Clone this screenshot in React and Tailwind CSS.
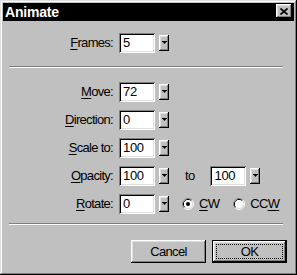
const raised =
  'shadow-[inset_-1px_-1px_#000,inset_1px_1px_#fff,inset_-2px_-2px_#808080,inset_2px_2px_#dfdfdf]';
const sunken =
  'shadow-[inset_1px_1px_#808080,inset_-1px_-1px_#fff,inset_2px_2px_#000,inset_-2px_-2px_#dfdfdf]';

function NumBox({ value, className = '' }) {
  return (
    <div className={`h-[20px] w-[36px] bg-white pl-[4px] pt-[3px] leading-[14px] tracking-[-0.3px] ${sunken} ${className}`}>
      {value}
    </div>
  );
}

function DropBtn() {
  return (
    <div className={`ml-[4px] flex h-[16px] w-[10px] items-center justify-center bg-[#c0c0c0] ${raised}`}>
      <svg width="5" height="4" viewBox="0 0 5 4">
        <path d="M0 0H5L2.5 3Z" fill="#000" />
        <rect x="0" y="0" width="5" height="1" fill="#000" />
      </svg>
    </div>
  );
}

function Label({ pre = '', ul, post }) {
  return (
    <div className="w-[110px] text-right">
      {pre}
      <span className="underline underline-offset-2">{ul}</span>
      {post}
    </div>
  );
}

function Row({ children, className = '' }) {
  return <div className={`flex h-[20px] items-center ${className}`}>{children}</div>;
}

function Radio({ checked }) {
  return (
    <svg width="12" height="12" viewBox="0 0 12 12">
      <path d="M2.11 9.89A5.5 5.5 0 0 1 9.89 2.11" stroke="#808080" fill="none" />
      <path d="M9.89 2.11A5.5 5.5 0 0 1 2.11 9.89" stroke="#fff" fill="none" />
      <path d="M2.82 9.18A4.5 4.5 0 0 1 9.18 2.82" stroke="#000" fill="none" />
      <path d="M9.18 2.82A4.5 4.5 0 0 1 2.82 9.18" stroke="#dfdfdf" fill="none" />
      <circle cx="6" cy="6" r="4" fill="#fff" />
      {checked && <circle cx="6" cy="6" r="2" fill="#000" />}
    </svg>
  );
}

function Separator({ className = '' }) {
  return <div className={`ml-[6px] h-[2px] w-[274px] border-t border-t-[#808080] border-b border-b-white ${className}`} />;
}

export default function App() {
  return (
    <div
      className={`flex h-[275px] w-[297px] flex-col bg-[#c0c0c0] p-[3px] font-['Liberation_Sans',Arial,sans-serif] text-[13px] tracking-[-0.7px] text-black shadow-[inset_-1px_-1px_#000,inset_1px_1px_#dfdfdf,inset_-2px_-2px_#808080,inset_2px_2px_#fff]`}
    >
      <div className="flex h-[18px] items-start justify-between bg-black pl-[2px] pr-[2px]">
        <span className="text-[14px] font-bold leading-[18px] tracking-[-0.2px] text-white">Animate</span>
        <div className={`mt-[1px] flex h-[14px] w-[16px] items-center justify-center bg-[#c0c0c0] ${raised}`}>
          <svg width="8" height="7" viewBox="0 0 8 7">
            <path d="M0.5 0.5L7.5 6.5M7.5 0.5L0.5 6.5" stroke="#000" strokeWidth="1.6" />
          </svg>
        </div>
      </div>

      <div className="flex flex-col pt-[12px]">
        <Row>
          <Label ul="F" post="rames:" />
          <NumBox value="5" className="ml-[6px]" />
          <DropBtn />
        </Row>

        <Separator className="mt-[13px]" />

        <div className="mt-[14px] flex flex-col gap-[8px]">
          <Row>
            <Label ul="M" post="ove:" />
            <NumBox value="72" className="ml-[6px]" />
            <DropBtn />
          </Row>
          <Row>
            <Label ul="D" post="irection:" />
            <NumBox value="0" className="ml-[6px]" />
            <DropBtn />
          </Row>
          <Row>
            <Label ul="S" post="cale to:" />
            <NumBox value="100" className="ml-[6px]" />
            <DropBtn />
          </Row>
          <Row>
            <Label ul="O" post="pacity:" />
            <NumBox value="100" className="ml-[6px]" />
            <DropBtn />
            <span className="ml-[16px]">to</span>
            <NumBox value="100" className="ml-[16px]" />
            <DropBtn />
          </Row>
          <Row>
            <Label ul="R" post="otate:" />
            <NumBox value="0" className="ml-[6px]" />
            <DropBtn />
            <div className="ml-[13px] flex items-center">
              <Radio checked />
              <span className="ml-[5px]">
                <span className="underline underline-offset-2">C</span>W
              </span>
            </div>
            <div className="ml-[14px] flex items-center">
              <Radio />
              <span className="ml-[5px]">
                CC<span className="underline underline-offset-2">W</span>
              </span>
            </div>
          </Row>
        </div>

        <Separator className="mt-[9px]" />

        <div className="mt-[15px] flex justify-end gap-[6px] pr-[7px]">
          <div className={`flex h-[23px] w-[75px] items-center justify-center bg-[#c0c0c0] ${raised}`}>
            Cancel
          </div>
          <div className="h-[23px] w-[75px] border border-black">
            <div className={`flex h-full w-full items-center justify-center bg-[#c0c0c0] p-[3px] ${raised}`}>
              <div className="flex h-full w-full items-center justify-center border border-dotted border-black">
                OK
              </div>
            </div>
          </div>
        </div>
      </div>
    </div>
  );
}
